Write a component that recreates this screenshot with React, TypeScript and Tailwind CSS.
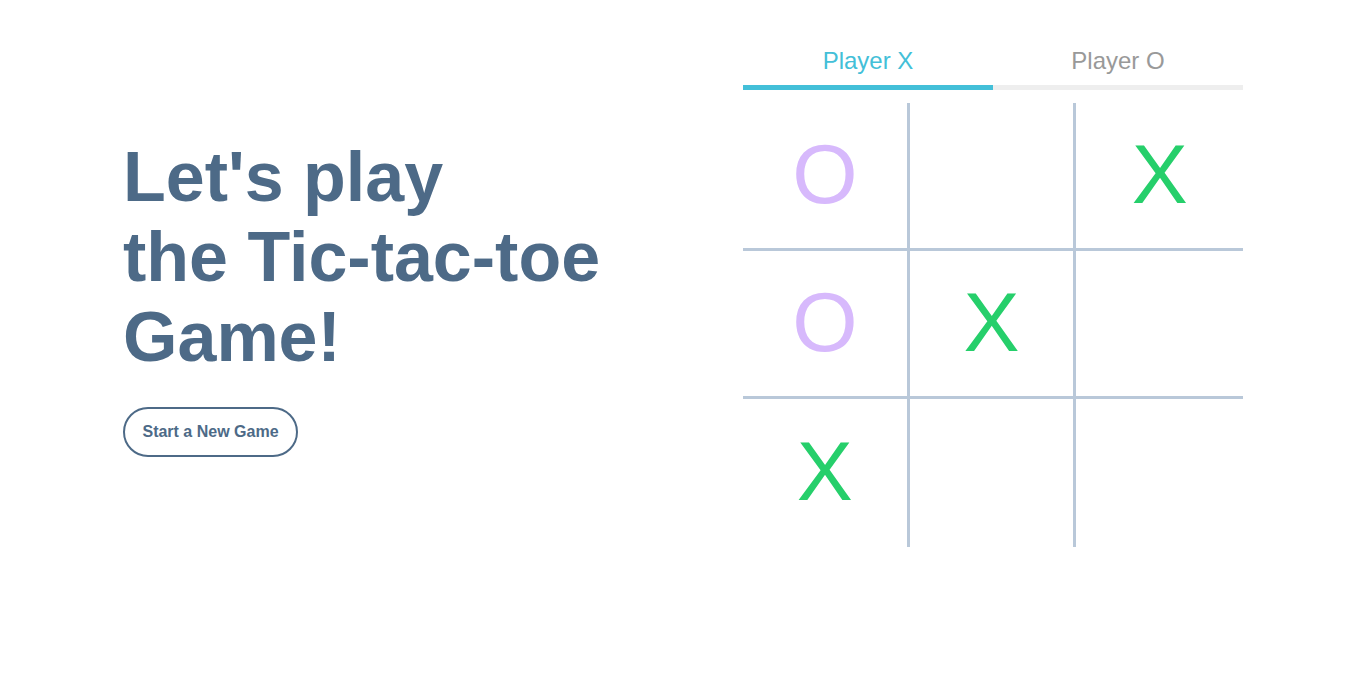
import { useState } from "react";

type Mark = "X" | "O" | "";

const opening: Mark[] = ["O", "", "X", "O", "X", "", "X", "", ""];

const cellBorders = [
  "border-r-3 border-b-3",
  "border-r-3 border-b-3",
  "border-b-3",
  "border-r-3 border-b-3",
  "border-r-3 border-b-3",
  "border-b-3",
  "border-r-3",
  "border-r-3",
  "",
];

function PlayerTab({ name, active }: { name: string; active: boolean }) {
  return (
    <div
      className={
        active
          ? "flex-1 border-b-5 border-[#43bfd8] pb-2 text-center text-[#43bfd8]"
          : "flex-1 border-b-5 border-[#eeeeee] pb-2 text-center text-[#999999]"
      }
    >
      {name}
    </div>
  );
}

export default function App() {
  const [cells, setCells] = useState<Mark[]>(opening);
  const [turn, setTurn] = useState<Mark>("X");

  const play = (index: number) => {
    if (cells[index]) return;
    setCells(cells.map((mark, i) => (i === index ? turn : mark)));
    setTurn(turn === "X" ? "O" : "X");
  };

  const restart = () => {
    setCells(cells.map(() => ""));
    setTurn("X");
  };

  return (
    <main className="mx-auto flex max-w-[1120px] flex-wrap items-start justify-between font-['Liberation_Sans',Arial,sans-serif]">
      <section className="pt-[137px]">
        <h1 className="text-[70px] leading-[80px] font-bold text-[#4d6a87]">
          Let's play
          <br />
          the Tic-tac-toe
          <br />
          Game!
        </h1>
        <button
          type="button"
          onClick={restart}
          className="mt-[30px] h-[50px] w-[175px] rounded-full border-2 border-[#4d6a87] text-base font-bold text-[#4d6a87]"
        >
          Start a New Game
        </button>
      </section>
      <section className="w-full max-w-[500px] pt-[45px]">
        <div className="flex text-2xl">
          <PlayerTab name="Player X" active={turn === "X"} />
          <PlayerTab name="Player O" active={turn === "O"} />
        </div>
        <div className="mt-[13px] grid grid-cols-3">
          {cells.map((mark, index) => (
            <button
              key={index}
              type="button"
              aria-label={mark ? undefined : `Empty cell ${index + 1}`}
              onClick={() => play(index)}
              className={`h-[148px] border-[#b9c8d9] pb-1 text-[84px] leading-none ${cellBorders[index]} ${mark === "X" ? "text-[#26cf6b]" : "text-[#d7b9fc]"}`}
            >
              {mark}
            </button>
          ))}
        </div>
      </section>
    </main>
  );
}
